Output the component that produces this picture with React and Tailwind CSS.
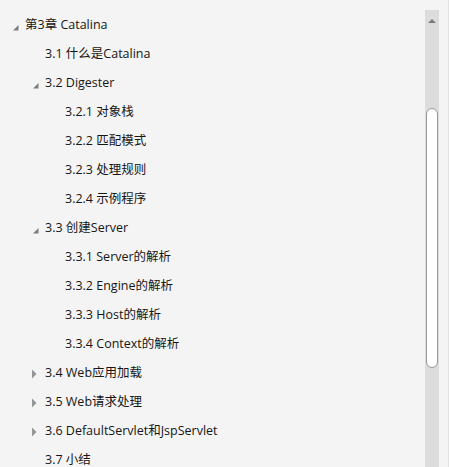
const items = [
  { level: 0, state: "open", label: "第3章 Catalina" },
  { level: 1, label: "3.1 什么是Catalina" },
  { level: 1, state: "open", label: "3.2 Digester" },
  { level: 2, label: "3.2.1 对象栈" },
  { level: 2, label: "3.2.2 匹配模式" },
  { level: 2, label: "3.2.3 处理规则" },
  { level: 2, label: "3.2.4 示例程序" },
  { level: 1, state: "open", label: "3.3 创建Server" },
  { level: 2, label: "3.3.1 Server的解析" },
  { level: 2, label: "3.3.2 Engine的解析" },
  { level: 2, label: "3.3.3 Host的解析" },
  { level: 2, label: "3.3.4 Context的解析" },
  { level: 1, state: "closed", label: "3.4 Web应用加载" },
  { level: 1, state: "closed", label: "3.5 Web请求处理" },
  { level: 1, state: "closed", label: "3.6 DefaultServlet和JspServlet" },
  { level: 1, label: "3.7 小结" },
];

const indent = ["pl-[10px]", "pl-[30px]", "pl-[50px]"];

function Toggle({ state }) {
  if (state === "open") {
    return (
      <svg width="15" height="10" viewBox="0 0 15 10" className="mt-[2px]">
        <polygon points="3,8.5 8.5,8.5 8.5,3" fill="#7d7d7d" />
      </svg>
    );
  }
  if (state === "closed") {
    return (
      <svg width="15" height="10" viewBox="0 0 15 10">
        <polygon points="2,0.5 6.5,5 2,9.5" fill="#959595" />
      </svg>
    );
  }
  return <span className="w-[15px]" />;
}

export default function App() {
  return (
    <div
      className="flex h-[467px] w-[449px] overflow-hidden bg-[#f4f4f4] text-[12.5px] text-[#161616]"
      style={{ fontFamily: '"Open Sans", "Noto Sans CJK SC", sans-serif' }}
    >
      <div className="flex-1 pt-[11px]">
        {items.map((item) => (
          <div key={item.label} className={`flex h-[29px] items-center ${indent[item.level]}`}>
            <Toggle state={item.state} />
            <span className="whitespace-nowrap">{item.label}</span>
          </div>
        ))}
      </div>
      <div className="mt-[10px] flex w-[14px] flex-col items-center bg-[#dcdcdc]">
        <svg width="8" height="5" viewBox="0 0 8 5" className="mt-[8px]">
          <polygon points="0,5 8,5 4,1" fill="#7c7c7c" />
        </svg>
        <div className="mt-[85px] h-[260px] w-[12px] rounded-full border border-[#9a9a9a] bg-white" />
      </div>
      <div className="w-[9px]" />
      <div className="w-px bg-[#e2e2e2]" />
    </div>
  );
}
